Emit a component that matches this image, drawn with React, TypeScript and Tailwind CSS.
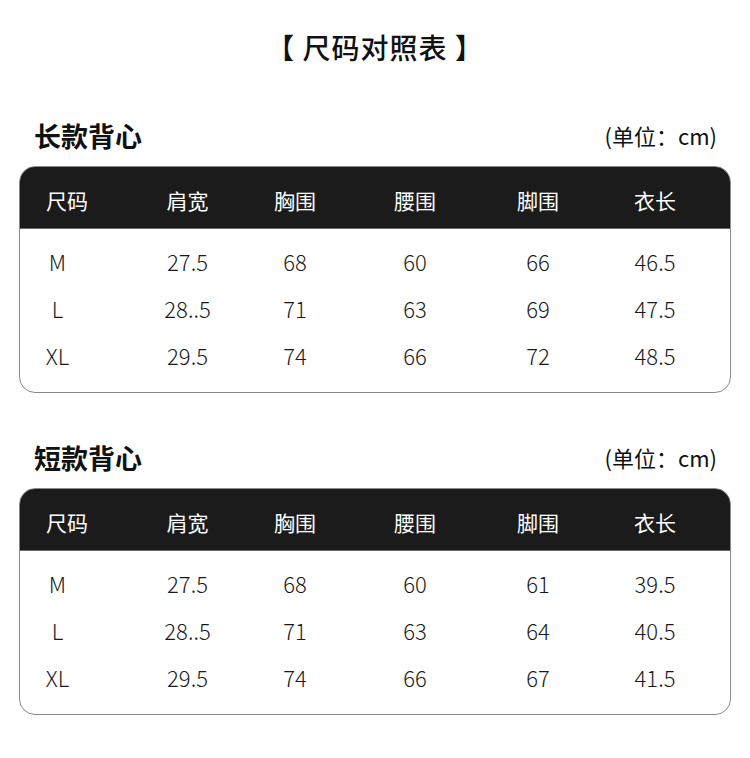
const headers = ['尺码', '肩宽', '胸围', '腰围', '脚围', '衣长']

const longRows = [
  ['M', '27.5', '68', '60', '66', '46.5'],
  ['L', '28..5', '71', '63', '69', '47.5'],
  ['XL', '29.5', '74', '66', '72', '48.5'],
]

const shortRows = [
  ['M', '27.5', '68', '60', '61', '39.5'],
  ['L', '28..5', '71', '63', '64', '40.5'],
  ['XL', '29.5', '74', '66', '67', '41.5'],
]

const grid = 'grid grid-cols-[110px_115px_100px_140px_106px_128px]'

function SizeTable({ title, rows }: { title: string; rows: string[][] }) {
  return (
    <section className="px-[19px]">
      <div className="flex items-center justify-between h-[34px]">
        <h2 className="pl-[15px] text-[27px] font-bold text-[#111] leading-none">{title}</h2>
        <span className="pr-[14px] text-[22px] text-[#111] leading-none">(单位：cm)</span>
      </div>

      <div className="mt-[14px] border border-[#8a8a8a] rounded-[16px] overflow-hidden">
        <div className={`${grid} h-[62px] pt-[7px] items-center bg-[#1b1b1b] text-white text-[21px] font-normal border-b border-[#6a6a6a]`}>
          {headers.map((h, i) => (
            <div key={h} className={i === 0 ? 'pl-[26px]' : 'text-center'}>{h}</div>
          ))}
        </div>

        <div className="pt-[9px] pb-[13px]">
          {rows.map((r) => (
            <div key={r[0]} className={`${grid} h-[47px] items-center text-[22px] font-light text-[#1a1a1a]`}>
              {r.map((c, i) => (
                <div key={i} className="text-center">
                  {i === 0 ? <div className="w-[75px] text-center">{c}</div> : c}
                </div>
              ))}
            </div>
          ))}
        </div>
      </div>
    </section>
  )
}

export default function App() {
  return (
    <div className="w-[750px] h-[758px] bg-white font-['Noto_Sans_CJK_SC',sans-serif]">
      <h1 className="pt-[30px] text-center text-[28px] leading-[34px] font-medium tracking-[1px] text-[#111]">【 尺码对照表 】</h1>

      <div className="mt-[54px]">
        <SizeTable title="长款背心" rows={longRows} />
      </div>

      <div className="mt-[47px]">
        <SizeTable title="短款背心" rows={shortRows} />
      </div>
    </div>
  )
}
